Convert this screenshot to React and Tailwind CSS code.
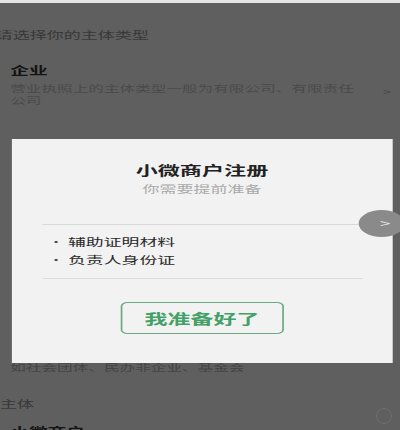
export default function App() {
  return (
    <div className="relative h-[430px] w-[400px] overflow-hidden bg-[#5f5f5f] font-['Noto_Sans_CJK_SC','Noto_Sans',sans-serif]">
      <div className="h-[3px] bg-[#e6e6e6]" />
      <div className="relative h-[427px] w-[235.3px] origin-left scale-x-[1.7]">
        {/* background page */}
        <div className="ml-[-2.5px] pt-[25px] text-[10px] leading-[14px] text-[#383838]">请选择你的主体类型</div>
        <div className="mt-[21px] flex items-center justify-between pl-[6px] pr-[5px]">
          <div>
            <div className="text-[11px] font-bold leading-[14px] text-[#141414]">企业</div>
            <div className="mt-[5px] text-[9.2px] leading-[12px] text-[#4a4a4a]">
              <div>营业执照上的主体类型一般为有限公司、有限责任</div>
              <div>公司</div>
            </div>
          </div>
          <div className="mt-[14px] text-[9px] leading-[12px] text-[#444]">&gt;</div>
        </div>
        <div className="mt-[255px] pl-[6px] text-[9.2px] leading-[12px] text-[#444]">如社会团体、民办非企业、基金会</div>
        <div className="mt-[24px] text-[10px] leading-[14px] text-[#383838]">主体</div>
        <div className="mt-[13px] pl-[6px] text-[11px] font-bold leading-[14px] text-[#141414]">小微商户</div>

        {/* modal */}
        <div className="absolute left-[7px] top-[136px] flex h-[224px] w-[223.6px] flex-col bg-[#f2f2f2]">
          <div className="pt-[22px] text-center text-[13px] font-bold leading-[18px] text-[#222]">小微商户注册</div>
          <div className="mt-[3px] text-center text-[10px] leading-[14px] text-[#a9a9a9]">你需要提前准备</div>
          <div className="mx-[17.7px] mt-[28px] h-px bg-[#d8d8d8]" />
          <div className="mt-[8px] pl-[25px] text-[10.5px] leading-[18px] text-[#2a2a2a]">
            <div className="flex items-center gap-[6px]">
              <span className="h-[2.5px] w-[2px] rounded-full bg-[#333]" />
              <span>辅助证明材料</span>
            </div>
            <div className="flex items-center gap-[6px]">
              <span className="h-[2.5px] w-[2px] rounded-full bg-[#333]" />
              <span>负责人身份证</span>
            </div>
          </div>
          <div className="mx-[17.7px] mt-[9px] h-px bg-[#dcdcdc]" />
          <div className="mt-[23px] flex justify-center">
            <div className="flex h-[32px] w-[96.5px] items-center justify-center rounded-[4px] border border-[#6aa983] text-[13.5px] font-bold text-[#43a066]">
              我准备好了
            </div>
          </div>
        </div>

        {/* side arrow */}
        <div className="absolute left-[210.6px] top-[207px] flex h-[27px] w-[27px] items-center rounded-full bg-[#8a8a8a] pl-[13px] text-[11px] leading-none text-[#e2e2e2]">
          &gt;
        </div>
      </div>
      <div className="absolute left-[376px] top-[408px] h-[16px] w-[16px] rounded-full border border-[#6e6e6e]" />
    </div>
  );
}
